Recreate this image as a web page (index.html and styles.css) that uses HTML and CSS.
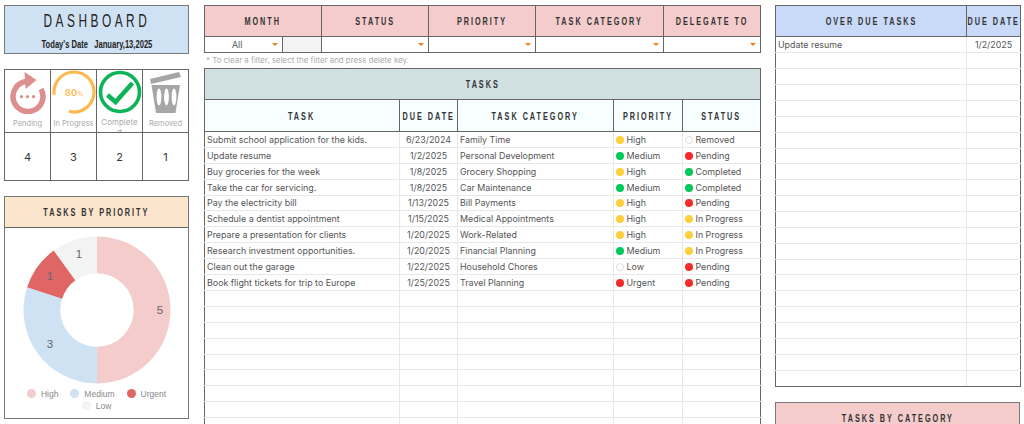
FILE: index.html
```html
<!DOCTYPE html>
<html>
<head>
    <title>Dashboard</title>
    <link rel="stylesheet" href="styles.css">
</head>
<body>
<div class="page">
    <div class="col-left">
        <div class="title-box">
            <h1><span class="nar">DASHBOARD</span></h1>
            <p><span class="nar">Today's Date &nbsp; January,13,2025</span></p>
        </div>

        <div class="stats">
            <div class="stat-top">
                <svg width="44" height="44" viewBox="0 0 44 44">
                    <path d="M35 19A15 15 0 1 1 20 11.6" fill="none" stroke="#dd8e8e" stroke-width="5.5"/>
                    <path d="M18.5 2L30.5 10L19.5 19Z" fill="#dd8e8e"/>
                    <circle cx="15.5" cy="26.7" r="1.6" fill="#dd8e8e"/>
                    <circle cx="21.5" cy="26.7" r="1.6" fill="#dd8e8e"/>
                    <circle cx="27.5" cy="26.7" r="1.6" fill="#dd8e8e"/>
                </svg>
                <span>Pending</span>
            </div>
            <div class="stat-top">
                <svg width="44" height="44" viewBox="0 0 44 44">
                    <path d="M2.2 24.8A20 20 0 1 1 16.8 41.3" fill="none" stroke="#ffb850" stroke-width="3.2"/>
                    <text x="22" y="25.5" text-anchor="middle" class="ring-num">80<tspan class="ring-pct">%</tspan></text>
                </svg>
                <span>In Progress</span>
            </div>
            <div class="stat-top stat-wrap">
                <svg width="44" height="44" viewBox="0 0 44 44">
                    <circle cx="22" cy="22" r="19.5" fill="none" stroke="#0cb458" stroke-width="3.6"/>
                    <path d="M9.5 25L17.5 32L34.5 13" fill="none" stroke="#0cb458" stroke-width="4.5"/>
                </svg>
                <span>Completed</span>
            </div>
            <div class="stat-top">
                <svg width="44" height="44" viewBox="0 0 44 44">
                    <path d="M6 9L35 2L37 7L7 14Z" fill="#a6a6a6"/>
                    <path d="M7.5 15H36L31.5 43H12Z" fill="#a6a6a6"/>
                    <ellipse cx="15" cy="27" rx="2.4" ry="8.5" fill="#fff"/>
                    <ellipse cx="22.5" cy="27" rx="2.4" ry="8.5" fill="#fff"/>
                    <ellipse cx="30" cy="27" rx="2.4" ry="8.5" fill="#fff"/>
                </svg>
                <span>Removed</span>
            </div>
            <div class="stat-num">4</div>
            <div class="stat-num">3</div>
            <div class="stat-num">2</div>
            <div class="stat-num">1</div>
        </div>

        <div class="card priority-card">
            <div class="head head-orange"><span class="nar">TASKS BY PRIORITY</span></div>
            <div class="chart">
                <svg width="183" height="158" viewBox="0 0 183 158">
                    <g transform="translate(92 82)">
                        <path d="M0 -73.5A73.5 73.5 0 0 1 0 73.5L0 36.7A36.7 36.7 0 0 0 0 -36.7Z" fill="#f4cccc"/>
                        <path d="M0 73.5A73.5 73.5 0 0 1 -69.9 -22.7L-34.9 -11.3A36.7 36.7 0 0 0 0 36.7Z" fill="#cfe2f3"/>
                        <path d="M-69.9 -22.7A73.5 73.5 0 0 1 -43.2 -59.5L-21.6 -29.7A36.7 36.7 0 0 0 -34.9 -11.3Z" fill="#e06666"/>
                        <path d="M-43.2 -59.5A73.5 73.5 0 0 1 0 -73.5L0 -36.7A36.7 36.7 0 0 0 -21.6 -29.7Z" fill="#f3f3f3"/>
                        <text x="63" y="4" class="slice">5</text>
                        <text x="-47" y="38" class="slice">3</text>
                        <text x="-47" y="-30" class="slice">1</text>
                        <text x="-18" y="-52" class="slice">1</text>
                    </g>
                </svg>
                <div class="legend">
                    <span><i class="sw-high"></i>High</span>
                    <span><i class="sw-medium"></i>Medium</span>
                    <span><i class="sw-urgent"></i>Urgent</span>
                    <span><i class="sw-low"></i>Low</span>
                </div>
            </div>
        </div>
    </div>

    <div class="col-mid">
        <table class="filters">
            <colgroup><col class="f1"><col class="f2"><col class="f3"><col class="f3"><col class="f4"><col class="f5"></colgroup>
            <tr>
                <th colspan="2"><span class="nar">MONTH</span></th>
                <th><span class="nar">STATUS</span></th>
                <th><span class="nar">PRIORITY</span></th>
                <th><span class="nar">TASK CATEGORY</span></th>
                <th><span class="nar">DELEGATE TO</span></th>
            </tr>
            <tr>
                <td><div class="select"><span class="all">All</span><b class="arrow"></b></div></td>
                <td class="blank"></td>
                <td><div class="select"><span></span><b class="arrow"></b></div></td>
                <td><div class="select"><span></span><b class="arrow"></b></div></td>
                <td><div class="select"><span></span><b class="arrow"></b></div></td>
                <td><div class="select"><span></span><b class="arrow"></b></div></td>
            </tr>
        </table>
        <p class="note">* To clear a filter, select the filter and press delete key.</p>

        <table class="tasks">
            <colgroup><col class="t1"><col class="t2"><col class="t3"><col class="t4"><col class="t5"></colgroup>
            <tr><th colspan="5" class="tasks-title"><span class="nar">TASKS</span></th></tr>
            <tr class="tasks-head">
                <th><span class="nar">TASK</span></th>
                <th><span class="nar">DUE DATE</span></th>
                <th><span class="nar">TASK CATEGORY</span></th>
                <th><span class="nar">PRIORITY</span></th>
                <th><span class="nar">STATUS</span></th>
            </tr>
            <tr><td>Submit school application for the kids.</td><td class="c">6/23/2024</td><td>Family Time</td><td><i class="dot yellow"></i>High</td><td><i class="dot none"></i>Removed</td></tr>
            <tr><td>Update resume</td><td class="c">1/2/2025</td><td>Personal Development</td><td><i class="dot green"></i>Medium</td><td><i class="dot red"></i>Pending</td></tr>
            <tr><td>Buy groceries for the week</td><td class="c">1/8/2025</td><td>Grocery Shopping</td><td><i class="dot yellow"></i>High</td><td><i class="dot green"></i>Completed</td></tr>
            <tr><td>Take the car for servicing.</td><td class="c">1/8/2025</td><td>Car Maintenance</td><td><i class="dot green"></i>Medium</td><td><i class="dot green"></i>Completed</td></tr>
            <tr class="thin"><td>Pay the electricity bill</td><td class="c">1/13/2025</td><td>Bill Payments</td><td><i class="dot yellow"></i>High</td><td><i class="dot red"></i>Pending</td></tr>
            <tr><td>Schedule a dentist appointment</td><td class="c">1/15/2025</td><td>Medical Appointments</td><td><i class="dot yellow"></i>High</td><td><i class="dot yellow"></i>In Progress</td></tr>
            <tr><td>Prepare a presentation for clients</td><td class="c">1/20/2025</td><td>Work-Related</td><td><i class="dot yellow"></i>High</td><td><i class="dot yellow"></i>In Progress</td></tr>
            <tr><td>Research investment opportunities.</td><td class="c">1/20/2025</td><td>Financial Planning</td><td><i class="dot green"></i>Medium</td><td><i class="dot yellow"></i>In Progress</td></tr>
            <tr><td>Clean out the garage</td><td class="c">1/22/2025</td><td>Household Chores</td><td><i class="dot none"></i>Low</td><td><i class="dot red"></i>Pending</td></tr>
            <tr><td>Book flight tickets for trip to Europe</td><td class="c">1/25/2025</td><td>Travel Planning</td><td><i class="dot red"></i>Urgent</td><td><i class="dot red"></i>Pending</td></tr>
            <tr><td></td><td></td><td></td><td></td><td></td></tr>
            <tr><td></td><td></td><td></td><td></td><td></td></tr>
            <tr><td></td><td></td><td></td><td></td><td></td></tr>
            <tr><td></td><td></td><td></td><td></td><td></td></tr>
            <tr class="thin"><td></td><td></td><td></td><td></td><td></td></tr>
            <tr><td></td><td></td><td></td><td></td><td></td></tr>
            <tr><td></td><td></td><td></td><td></td><td></td></tr>
            <tr><td></td><td></td><td></td><td></td><td></td></tr>
            <tr><td></td><td></td><td></td><td></td><td></td></tr>
        </table>
    </div>

    <div class="col-right">
        <table class="overdue">
            <colgroup><col class="o1"><col class="o2"></colgroup>
            <tr><th><span class="nar">OVER DUE TASKS</span></th><th><span class="nar">DUE DATE</span></th></tr>
            <tr><td>Update resume</td><td class="c">1/2/2025</td></tr>
            <tr><td></td><td></td></tr><tr><td></td><td></td></tr><tr><td></td><td></td></tr>
            <tr><td></td><td></td></tr><tr><td></td><td></td></tr><tr><td></td><td></td></tr>
            <tr class="thin"><td></td><td></td></tr><tr><td></td><td></td></tr><tr><td></td><td></td></tr>
            <tr><td></td><td></td></tr><tr><td></td><td></td></tr><tr><td></td><td></td></tr>
            <tr><td></td><td></td></tr><tr class="thin"><td></td><td></td></tr><tr><td></td><td></td></tr>
            <tr><td></td><td></td></tr><tr><td></td><td></td></tr><tr><td></td><td></td></tr>
            <tr><td></td><td></td></tr><tr><td></td><td></td></tr><tr><td></td><td></td></tr>
        </table>
        <div class="card category-card">
            <div class="head head-pink"><span class="nar">TASKS BY CATEGORY</span></div>
        </div>
    </div>
</div>
</body>
</html>
```

FILE: styles.css
```css
html, body {
    margin: 0;
    height: 424px;
    overflow: hidden;
    background: #fff;
}

body {
    font-family: "Inter", "Liberation Sans", sans-serif;
    font-size: 8.9px;
    color: #555;
}

.page {
    display: flex;
    gap: 15px;
    height: 424px;
    box-sizing: border-box;
    padding: 5px 4px 0;
    overflow: hidden;
}

.col-left {
    width: 185px;
    flex: none;
    display: flex;
    flex-direction: column;
    gap: 15px;
}

.col-mid {
    width: 556px;
    flex: none;
}

.col-right {
    width: 245px;
    flex: none;
    display: flex;
    flex-direction: column;
    gap: 15px;
}

h1, th, .head, .title-box p {
    font-family: "Liberation Sans", sans-serif;
}

/* headings are condensed, no narrow family is installed */
.nar {
    display: inline-block;
    transform: scaleX(0.66);
    margin: 0 -40px;
    white-space: nowrap;
}

/* title */
.title-box {
    height: 49px;
    flex: none;
    box-sizing: border-box;
    background: #cfe2f3;
    border: 1px solid #777;
    text-align: center;
    color: #222;
}

.title-box h1 {
    margin: 4px 0 0;
    font-size: 18px;
    font-weight: normal;
    letter-spacing: 5.3px;
    line-height: 22px;
}

.title-box p {
    margin: 5px 0 0;
    font-size: 11.5px;
    font-weight: bold;
    line-height: 14px;
}

/* counters */
.stats {
    display: grid;
    flex: none;
    grid-template-columns: repeat(4, 1fr);
    grid-template-rows: 62px 47px;
    height: 112px;
    box-sizing: border-box;
    border: 1px solid #666;
    background: #666;
    gap: 1px;
}

.stat-top {
    background: #fff;
    display: flex;
    flex-direction: column;
    align-items: center;
    overflow: hidden;
    text-align: center;
    color: #aaa;
    font-size: 7.5px;
    line-height: 10px;
}

.stat-top svg {
    flex: none;
}

.stat-top span {
    margin-top: 5px;
    white-space: nowrap;
}

.stat-wrap span {
    margin-top: 3px;
    width: 38px;
    white-space: normal;
    word-break: break-all;
    font-size: 8px;
}

.ring-num {
    font-size: 9.5px;
    font-weight: 600;
    fill: #ffb850;
}

.ring-pct {
    font-size: 6px;
}

.stat-num {
    background: #fff;
    display: flex;
    align-items: center;
    justify-content: center;
    font-size: 11px;
    color: #333;
}

/* cards */
.card {
    border: 1px solid #777;
    box-sizing: border-box;
}

.head {
    height: 31px;
    box-sizing: border-box;
    border-bottom: 1px solid #666;
    text-align: center;
    line-height: 30px;
    font-size: 11px;
    font-weight: bold;
    letter-spacing: 3px;
    color: #333;
}

.head-orange {
    background: #fce5cd;
}

.head-pink {
    background: #f4cccc;
}

.priority-card {
    height: 223px;
    flex: none;
}

.category-card {
    height: 80px;
    flex: none;
}

.chart {
    display: flex;
    flex-direction: column;
    align-items: center;
}

.chart svg {
    display: block;
}

.slice {
    font-family: "Liberation Sans", sans-serif;
    font-size: 11.5px;
    fill: #666;
    text-anchor: middle;
}

.legend {
    display: flex;
    flex-wrap: wrap;
    justify-content: center;
    column-gap: 12px;
    margin-top: 2px;
    padding: 0 10px;
    font-family: "Liberation Sans", sans-serif;
    font-size: 8.5px;
    line-height: 12px;
    color: #888;
}

.legend i {
    display: inline-block;
    width: 9px;
    height: 9px;
    border-radius: 50%;
    margin-right: 5px;
    vertical-align: -1px;
}

.sw-high { background: #f4cccc; }
.sw-medium { background: #cfe2f3; }
.sw-urgent { background: #e06666; }
.sw-low { background: #f3f3f3; }

/* tables */
table {
    border-collapse: collapse;
    table-layout: fixed;
    width: 100%;
}

th {
    font-weight: bold;
    color: #333;
    font-size: 11px;
    letter-spacing: 3px;
    padding: 0;
    border: 1px solid #666;
    height: 30px;
    white-space: nowrap;
    overflow: hidden;
}

td {
    height: 15px;
    padding: 0 2px;
    border: 1px solid #e8e8e8;
    white-space: nowrap;
    overflow: hidden;
    line-height: 12px;
}

.thin td {
    height: 14px;
}

td.c {
    text-align: center;
}

.filters th {
    background: #f4cccc;
}

.filters td {
    border: 1px solid #666;
}

.f1 { width: 78px; }
.f2 { width: 39px; }
.f3 { width: 107px; }
.f4 { width: 128px; }
.f5 { width: 97px; }

.filters .blank {
    background: #f3f3f3;
}

.select {
    display: flex;
    justify-content: space-between;
    align-items: center;
}

.all {
    margin-left: 25px;
}

.arrow {
    border-left: 3px solid transparent;
    border-right: 3px solid transparent;
    border-top: 3px solid #e8801a;
    margin-right: 2px;
}

.note {
    margin: 0;
    height: 15px;
    line-height: 15px;
    padding-left: 2px;
    font-size: 7.9px;
    color: #aaa;
}

.tasks td:first-child, .overdue td:first-child {
    border-left-color: #666;
}

.tasks td:last-child, .overdue td:last-child {
    border-right-color: #666;
}

.overdue tr:last-child td {
    border-bottom-color: #666;
}

.t1 { width: 195px; }
.t2 { width: 58px; }
.t3 { width: 156px; }
.t4 { width: 69px; }
.t5 { width: 78px; }

.tasks-title {
    background: #d0e0e3;
}

.tasks-head th {
    background: #f6feff;
    height: 31px;
}

.dot {
    display: inline-block;
    box-sizing: border-box;
    width: 8px;
    height: 8px;
    border-radius: 50%;
    margin-right: 2.5px;
    vertical-align: -1px;
}

.yellow { background: #ffd03a; }
.green { background: #00c85a; }
.red { background: #f52a2a; }
.none { border: 1px solid #ddd; }

.o1 { width: 191px; }
.o2 { width: 54px; }

.overdue th {
    background: #c9daf8;
}
```
